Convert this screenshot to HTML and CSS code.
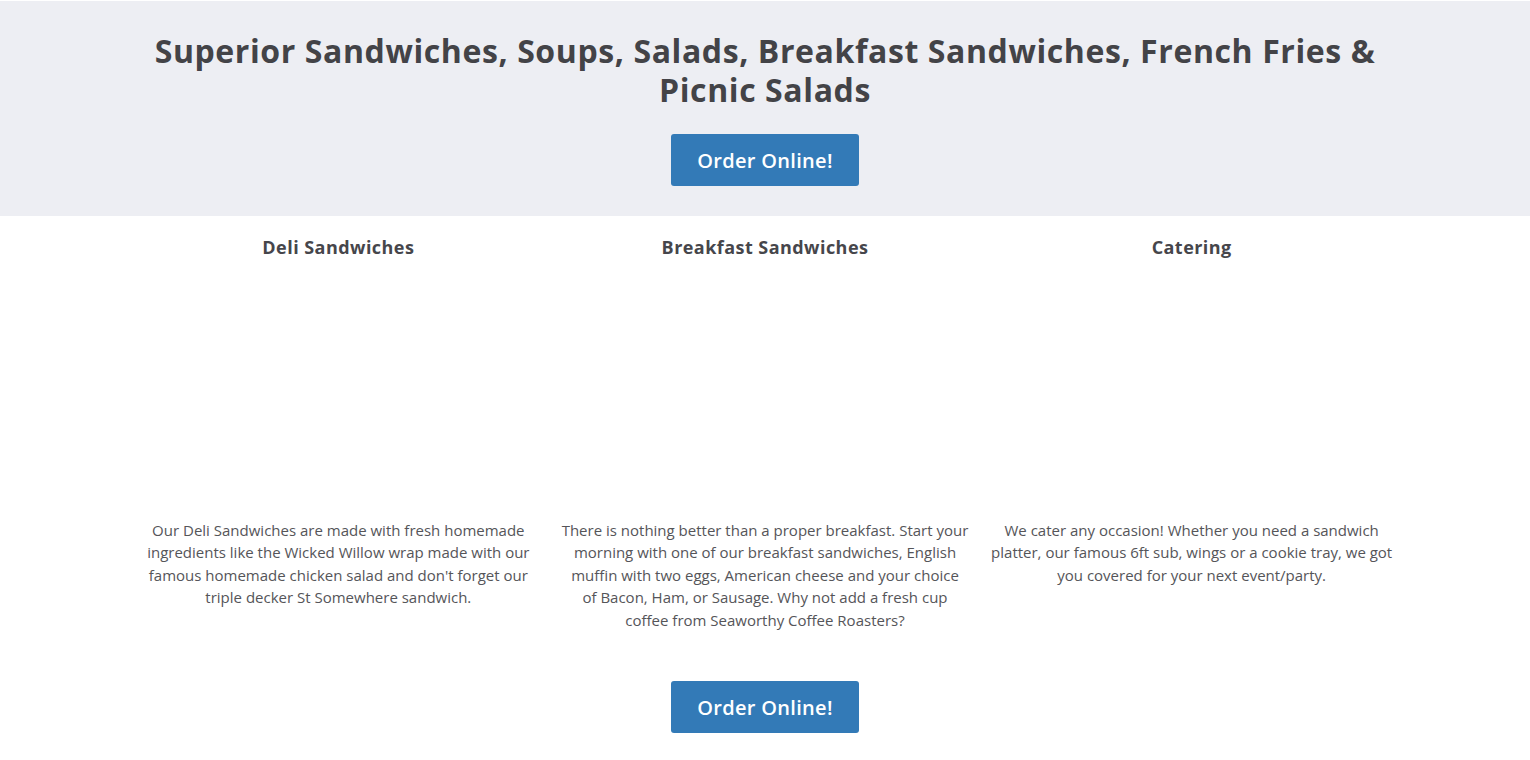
FILE: index.html
```html
<!DOCTYPE html>
<html lang="en">
<head>
<meta charset="utf-8">
<title>Superior Sandwiches</title>
<link rel="stylesheet" href="styles.css">
</head>
<body>
<section class="hero">
  <h1 class="hero-title">Superior Sandwiches, Soups, Salads, Breakfast Sandwiches, French Fries &amp; Picnic Salads</h1>
  <a class="btn" href="#">Order Online!</a>
</section>
<section class="features">
  <div class="columns">
    <div class="col">
      <h2 class="col-title">Deli Sandwiches</h2>
      <div class="col-media"></div>
      <p class="col-text">Our Deli Sandwiches are made with fresh homemade ingredients like the Wicked Willow wrap made with our famous homemade chicken salad and don't forget our triple decker St Somewhere sandwich.</p>
    </div>
    <div class="col">
      <h2 class="col-title">Breakfast Sandwiches</h2>
      <div class="col-media"></div>
      <p class="col-text">There is nothing better than a proper breakfast. Start your morning with one of our breakfast sandwiches, English muffin with two eggs, American cheese and your choice of&nbsp;Bacon, Ham, or Sausage. Why not add a fresh cup coffee&nbsp;from Seaworthy Coffee Roasters?</p>
    </div>
    <div class="col">
      <h2 class="col-title">Catering</h2>
      <div class="col-media"></div>
      <p class="col-text">We cater any occasion! Whether you need a sandwich platter, our famous 6ft sub, wings or a cookie tray, we got you covered for your next event/party.</p>
    </div>
  </div>
  <a class="btn" href="#">Order Online!</a>
</section>
</body>
</html>
```
FILE: styles.css
```css
* { box-sizing: border-box; }
html, body { margin: 0; padding: 0; background: #fff; }
body {
  font-family: "Open Sans", "Liberation Sans", sans-serif;
  color: #46464b;
  border-top: 1px solid #fff;
}
.hero {
  background: #edeef3;
  height: 215px;
  display: flex;
  flex-direction: column;
  align-items: center;
  padding-top: 30px;
}
.hero-title {
  margin: 0;
  width: 1280px;
  text-align: center;
  font-size: 32px;
  line-height: 39px;
  font-weight: 700;
  letter-spacing: 0.6px;
  color: #434347;
}
.btn {
  display: inline-flex;
  align-items: center;
  justify-content: center;
  width: 188px;
  height: 52px;
  background: #337ab7;
  color: #fff;
  text-decoration: none;
  font-size: 20px;
  font-weight: 600;
  letter-spacing: 0.3px;
  border-radius: 3px;
}
.hero .btn { margin-top: 25px; }
.features {
  display: flex;
  flex-direction: column;
  align-items: center;
}
.columns {
  width: 1280px;
  display: grid;
  grid-template-columns: repeat(3, 1fr);
}
.col {
  padding: 0 9px;
  text-align: center;
}
.col-title {
  margin: 19px 0 0;
  font-size: 18px;
  line-height: 24px;
  font-weight: 700;
  letter-spacing: 0.45px;
  color: #46464b;
}
.col-media { height: 260px; }
.col-text {
  margin: 0;
  font-size: 15px;
  line-height: 22.4px;
  color: #555559;
}
.features .btn { margin-top: 50px; }
```
